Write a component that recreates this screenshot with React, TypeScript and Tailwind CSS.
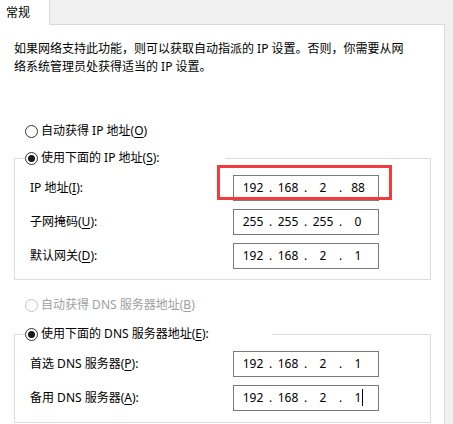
import React from "react";

const font = {
  fontFamily: '"Noto Sans", "Noto Sans CJK SC", sans-serif',
};

function Mn({ children }: { children: React.ReactNode }) {
  return <span className="underline underline-offset-2">{children}</span>;
}

function Radio({ checked, disabled }: { checked?: boolean; disabled?: boolean }) {
  return (
    <span
      className={`flex h-[13px] w-[13px] shrink-0 items-center justify-center rounded-full border bg-white ${
        disabled ? "border-[#c4c4c4]" : "border-[#333333]"
      }`}
    >
      {checked && <span className="h-[7px] w-[7px] rounded-full bg-[#1a1a1a]" />}
    </span>
  );
}

function IpBox({ parts, caret }: { parts: string[]; caret?: boolean }) {
  return (
    <div className="flex h-[26px] w-[146px] items-center border border-[#7a7a7a] bg-white pl-[6px] text-[12px] text-black">
      {parts.map((p, i) => (
        <React.Fragment key={i}>
          <span className="relative w-[26px] text-center leading-[16px]">
            {p}
            {caret && i === parts.length - 1 && (
              <span className="absolute left-[17px] top-[-1px] h-[17px] w-px bg-black" />
            )}
          </span>
          {i < parts.length - 1 && <span className="w-[9px] text-center leading-[16px]">.</span>}
        </React.Fragment>
      ))}
    </div>
  );
}

function FieldRow({
  label,
  parts,
  highlight,
  caret,
}: {
  label: React.ReactNode;
  parts: string[];
  highlight?: boolean;
  caret?: boolean;
}) {
  return (
    <div className="relative ml-[5px] flex h-[26px] items-center">
      <span className="w-[203px] leading-[18px]">{label}</span>
      <IpBox parts={parts} caret={caret} />
      {highlight && (
        <span className="pointer-events-none absolute left-[187px] top-[-10px] h-[35px] w-[175px] border-[3px] border-[#f03c3c]" />
      )}
    </div>
  );
}

export default function App() {
  return (
    <div className="h-[424px] w-[453px] overflow-hidden bg-[#f0f0f0] text-[12px] text-black" style={font}>
      {/* tab strip */}
      <div className="flex h-[25px]">
        <div className="flex w-[50px] items-start border-r border-[#d9d9d9] bg-white pl-[6px] pt-[4px] leading-[18px]">
          常规
        </div>
        <div className="w-[395px] border-b border-[#d9d9d9]" />
      </div>

      {/* page body */}
      <div className="flex">
        <div className="h-[399px] w-[445px] border-r border-[#d9d9d9] bg-white pl-[14px] pt-[15px]">
          <p className="leading-[18px]">
            如果网络支持此功能，则可以获取自动指派的 IP 设置。否则，你需要从网
            <br />
            络系统管理员处获得适当的 IP 设置。
          </p>

          <label className="ml-[11px] mt-[46px] flex h-[18px] items-center gap-[3px] leading-[18px]">
            <Radio />
            <span>
              自动获得 IP 地址(<Mn>O</Mn>)
            </span>
          </label>

          <fieldset className="mt-[9px] w-[417px] border border-[#dcdcdc] pb-[10px] pl-[10px]">
            <legend className="flex h-[18px] w-[200px] items-center gap-[3px] leading-[18px]">
              <Radio checked />
              <span>
                使用下面的 IP 地址(<Mn>S</Mn>):
              </span>
            </legend>
            <div className="mt-[8px] flex flex-col gap-[8px]">
              <FieldRow
                label={
                  <>
                    IP 地址(<Mn>I</Mn>):
                  </>
                }
                parts={["192", "168", "2", "88"]}
                highlight
              />
              <FieldRow
                label={
                  <>
                    子网掩码(<Mn>U</Mn>):
                  </>
                }
                parts={["255", "255", "255", "0"]}
              />
              <FieldRow
                label={
                  <>
                    默认网关(<Mn>D</Mn>):
                  </>
                }
                parts={["192", "168", "2", "1"]}
              />
            </div>
          </fieldset>

          <label className="ml-[11px] mt-[16px] flex h-[18px] items-center gap-[3px] leading-[18px] text-[#a0a0a0]">
            <Radio disabled />
            <span>
              自动获得 DNS 服务器地址(<Mn>B</Mn>)
            </span>
          </label>

          <fieldset className="mt-[11px] w-[417px] border border-[#dcdcdc] pb-[11px] pl-[10px]">
            <legend className="flex h-[18px] w-[247px] items-center gap-[3px] leading-[18px]">
              <Radio checked />
              <span>
                使用下面的 DNS 服务器地址(<Mn>E</Mn>):
              </span>
            </legend>
            <div className="mt-[8px] flex flex-col gap-[8px]">
              <FieldRow
                label={
                  <>
                    首选 DNS 服务器(<Mn>P</Mn>):
                  </>
                }
                parts={["192", "168", "2", "1"]}
              />
              <FieldRow
                label={
                  <>
                    备用 DNS 服务器(<Mn>A</Mn>):
                  </>
                }
                parts={["192", "168", "2", "1"]}
                caret
              />
            </div>
          </fieldset>
        </div>
        <div className="flex-1" />
      </div>
    </div>
  );
}
